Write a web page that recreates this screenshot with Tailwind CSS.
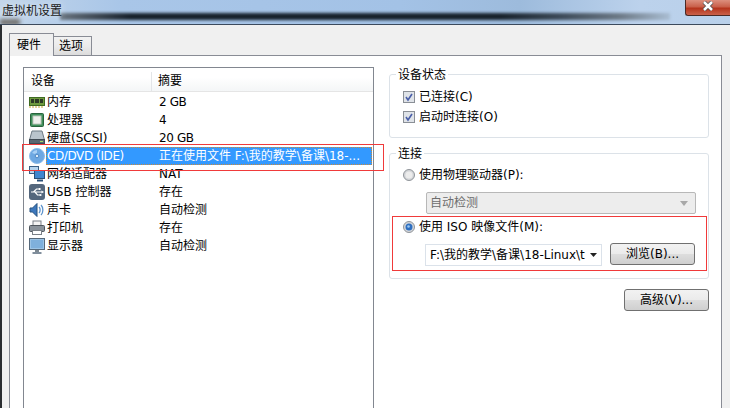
<!DOCTYPE html>
<html lang="zh-CN">
<head>
  <meta charset="UTF-8" />
  <title>虚拟机设置</title>
  <script src="https://cdn.jsdelivr.net/npm/@tailwindcss/browser@4"></script>
</head>
<body class="relative w-[730px] h-[408px] overflow-hidden bg-[#f0f0f0] text-[12px] leading-[18px] text-black font-['DejaVu_Sans','Noto_Sans_CJK_SC',sans-serif]">

  <!-- Title bar -->
  <header class="relative h-[25px] overflow-hidden border-b border-[#3c4a5c] bg-[linear-gradient(to_right,#c3d6ea_0,#a9c6e8_120px,#a3c2e6_400px,#9dbbdc_520px,#bcd2ec_640px,#b9d0ea_100%)]">
    <!-- blurred desktop showing through the glass -->
    <div class="absolute left-[60px] top-[13px] w-[610px] h-[7px] blur-[1.5px] bg-[linear-gradient(to_right,#6a7580,#18222c_70px,#18222c_440px,#3c4a58_500px,#6d7a87_560px,#a9bdd2)]"></div>
    <div class="absolute left-0 top-[19px] w-[20px] h-[6px] blur-[2px] bg-[#6d6a66]"></div>
    <span class="absolute left-[2px] top-[2px] text-[#1a1a1a] [text-shadow:0_0_6px_#e8eef5]">虚拟机设置</span>
    <div class="absolute right-0 top-0 w-[45px] h-[16px] rounded-bl-[3px] border-l border-b border-[#4b2a25] bg-[linear-gradient(to_bottom,#dc8f7e_0,#c9604a_45%,#b5341c_55%,#c9614a_100%)] flex items-start justify-center pt-[1px]">
      <svg width="12" height="10" viewBox="0 0 12 10"><path d="M2 1 L10 9 M10 1 L2 9" stroke="#4a4a4a" stroke-width="4"/><path d="M2 1 L10 9 M10 1 L2 9" stroke="#fff" stroke-width="2.500"/></svg>
    </div>
  </header>

  <div class="absolute left-0 top-[25px] bottom-0 w-[2px] bg-[#2a2d30]"></div>

  <main class="pl-[9px] pt-[8px] w-[722px]">
    <!-- Tabs -->
    <div class="flex items-end h-[22px]">
      <div class="w-[45px] h-[23px] pl-[7px] pt-[2px] border border-b-0 border-[#898c95] bg-[#f0f0f0] relative z-10 -mb-px">硬件</div>
      <div class="w-[38px] h-[19px] pl-[5px] border border-l-0 border-b-0 border-[#898c95] bg-[linear-gradient(to_bottom,#f2f2f2,#ebebeb_50%,#dcdcdc)]">选项</div>
    </div>

    <!-- Tab panel -->
    <div class="flex h-[360px] border border-b-0 border-[#898c95] bg-white pl-[13px] pt-[11px]">
      <!-- Device list -->
      <section class="w-[351px] h-[360px] border border-[#828790] bg-white shrink-0">
        <div class="flex h-[24px] border-b border-[#e5e5e5] bg-[linear-gradient(to_bottom,#fff,#fff_40%,#f4f6f7)] pt-[4px]">
          <div class="w-[128px] pl-[7px] border-r border-[#e3e5e8]">设备</div>
          <div class="pl-[6px]">摘要</div>
        </div>
        <ul class="pt-[1px]">
          <li class="flex h-[18px]">
            <span class="w-[23px] pl-[5px] pt-[2px] shrink-0"><svg width="16" height="14" viewBox="0 0 16 14"><rect x="0.5" y="2.5" width="15" height="8" fill="#6f9a3f" stroke="#3f6b22"/><rect x="2" y="4" width="3" height="4" fill="#2c3a25"/><rect x="6" y="4" width="4" height="4" fill="#2c3a25"/><rect x="11" y="4" width="3" height="4" fill="#2c3a25"/><path d="M1 11v2M4 11v2M7 11v2M10 11v2M13 11v2" stroke="#c7a534"/></svg></span>
            <span class="w-[112px] shrink-0">内存</span><span class="tracking-[-0.4px]">2 GB</span>
          </li>
          <li class="flex h-[18px]">
            <span class="w-[23px] pl-[6px] pt-[2px] shrink-0"><svg width="14" height="14" viewBox="0 0 14 14"><rect x="0.5" y="0.5" width="13" height="13" rx="1" fill="#3f8f5a" stroke="#28633c"/><rect x="3" y="3" width="8" height="8" fill="#eef0ec" stroke="#bfc7bd"/></svg></span>
            <span class="w-[112px] shrink-0">处理器</span><span>4</span>
          </li>
          <li class="flex h-[18px]">
            <span class="w-[23px] pl-[5px] pt-[1px] shrink-0"><svg width="16" height="15" viewBox="0 0 16 15"><path d="M3 1h10l2.500 9h-15z" fill="#b9c4cc" stroke="#6d7a84"/><rect x="0.500" y="9.500" width="15" height="4" fill="#5a6670" stroke="#3f4a53"/><rect x="11" y="11" width="3" height="1" fill="#9fdc6a"/></svg></span>
            <span class="w-[112px] shrink-0">硬盘(SCSI)</span><span class="tracking-[-0.4px]">20 GB</span>
          </li>
          <li class="flex h-[18px]">
            <span class="w-[22px] pl-[5px] pt-[1px] shrink-0"><svg width="16" height="16" viewBox="0 0 16 16"><circle cx="8" cy="8" r="7.500" fill="#6ea8e2" stroke="#8dbcea"/><path d="M3 5a6 6 0 0 1 5-3v3a3 3 0 0 0-2 1z" fill="#a9d0f4"/><circle cx="8" cy="8" r="1.800" fill="#dcecfa" stroke="#4f88c4"/></svg></span>
            <span class="flex-1 flex h-[18px] bg-[#3399ff] text-white outline-1 -outline-offset-1 outline-dotted outline-[#c98a3c] pl-[1px] mr-[1px]"><span class="w-[112px] shrink-0 tracking-[-0.4px]">CD/DVD (IDE)</span><span>正在使用文件 F:\我的教学\备课\18-...</span></span>
          </li>
          <li class="flex h-[18px]">
            <span class="w-[23px] pl-[5px] pt-[1px] shrink-0"><svg width="16" height="16" viewBox="0 0 16 16"><rect x="0.500" y="0.500" width="9" height="7" fill="#b6d4ee" stroke="#3a5f86"/><rect x="5.500" y="4.500" width="10" height="8" fill="#3f86cf" stroke="#2a4f78"/><path d="M8 14.500h6" stroke="#2a4f78" stroke-width="2"/></svg></span>
            <span class="w-[112px] shrink-0">网络适配器</span><span>NAT</span>
          </li>
          <li class="flex h-[18px]">
            <span class="w-[23px] pl-[5px] pt-[1px] shrink-0"><svg width="16" height="16" viewBox="0 0 16 16"><rect width="16" height="16" rx="3" fill="#54677d"/><path d="M2 8h11M4.500 8l3-3h2M6 8l2.500 3H11" stroke="#fff" fill="none" stroke-width="1.200"/><path d="M12.500 6.500l2.500 1.500-2.500 1.500z" fill="#fff"/><rect x="9.500" y="4" width="2" height="2" fill="#fff"/><circle cx="11.500" cy="11" r="1.100" fill="#fff"/></svg></span>
            <span class="w-[112px] shrink-0">USB 控制器</span><span>存在</span>
          </li>
          <li class="flex h-[18px]">
            <span class="w-[23px] pl-[5px] pt-[1px] shrink-0"><svg width="16" height="16" viewBox="0 0 16 16"><path d="M1 6h2.500L8 1.500v13L3.500 10H1z" fill="#3d78bd" stroke="#27527f"/><path d="M10 5c1.500 1.500 1.500 4.500 0 6M12 3c2.500 2.500 2.500 7.500 0 10" fill="none" stroke="#5d93cc" stroke-width="1.300"/></svg></span>
            <span class="w-[112px] shrink-0">声卡</span><span>自动检测</span>
          </li>
          <li class="flex h-[18px]">
            <span class="w-[23px] pl-[5px] pt-[1px] shrink-0"><svg width="16" height="16" viewBox="0 0 16 16"><rect x="4" y="1" width="8" height="5" fill="#f4f4f4" stroke="#7a8087"/><rect x="0.500" y="5.500" width="15" height="6" rx="1" fill="#8b939b" stroke="#50575e"/><rect x="3.500" y="10.500" width="9" height="4" fill="#fff" stroke="#7a8087"/></svg></span>
            <span class="w-[112px] shrink-0">打印机</span><span>存在</span>
          </li>
          <li class="flex h-[18px]">
            <span class="w-[23px] pl-[5px] pt-[1px] shrink-0"><svg width="16" height="16" viewBox="0 0 16 16"><rect x="0.500" y="0.500" width="15" height="11" fill="#9cc4e6" stroke="#56697b"/><rect x="2" y="2" width="12" height="8" fill="#7fb0dc"/><path d="M6 12h4v2H6z" fill="#7d8892"/><path d="M3.500 15h9" stroke="#56697b" stroke-width="1.500"/></svg></span>
            <span class="w-[112px] shrink-0">显示器</span><span>自动检测</span>
          </li>
        </ul>
      </section>

      <!-- Right column -->
      <div class="ml-[15px] w-[320px] pt-[7px] shrink-0">
        <fieldset class="relative h-[64px] border border-[#dce2e8] rounded-[3px] pl-[13px] pt-[12px]">
          <span class="absolute left-[6px] -top-[9px] bg-white px-[2px]">设备状态</span>
          <label class="flex items-center h-[20px] gap-[4px]">
            <svg width="12" height="12" viewBox="0 0 12 12"><rect x="0.500" y="0.500" width="11" height="11" fill="#dfe3e8" stroke="#8a8f96"/><path d="M3 6l2 3 4-6" fill="none" stroke="#4a5fa8" stroke-width="1.600"/></svg>
            已连接(C)
          </label>
          <label class="flex items-center h-[20px] gap-[4px]">
            <svg width="12" height="12" viewBox="0 0 12 12"><rect x="0.500" y="0.500" width="11" height="11" fill="#dfe3e8" stroke="#8a8f96"/><path d="M3 6l2 3 4-6" fill="none" stroke="#4a5fa8" stroke-width="1.600"/></svg>
            启动时连接(O)
          </label>
        </fieldset>

        <fieldset class="relative mt-[15px] h-[126px] border border-[#dce2e8] rounded-[3px] pl-[13px] pt-[12px]">
          <span class="absolute left-[6px] -top-[9px] bg-white px-[2px]">连接</span>
          <label class="flex items-center h-[18px] gap-[4px]">
            <svg width="12" height="12" viewBox="0 0 12 12"><circle cx="6" cy="6" r="5.500" fill="#d4d6d9" stroke="#8f9499"/><circle cx="6" cy="6" r="3.500" fill="#ececec"/></svg>
            使用物理驱动器(P):
          </label>
          <div class="ml-[23px] mt-[8px] flex items-center justify-between w-[270px] h-[22px] border border-[#b8b8b8] rounded-[2px] bg-[#ededed] pl-[3px] pr-[7px] text-[#6d6d6d]">
            自动检测
            <svg width="8" height="5" viewBox="0 0 8 5"><path d="M0 0h8L4 5z" fill="#a8a8a8"/></svg>
          </div>
          <label class="flex items-center h-[18px] gap-[4px] mt-[4px]">
            <svg width="12" height="12" viewBox="0 0 12 12"><circle cx="6" cy="6" r="5.500" fill="#d4d6d9" stroke="#8f9499"/><circle cx="6" cy="6" r="3.500" fill="#2f6fc0"/><circle cx="5.500" cy="5.500" r="1.300" fill="#9cc9f2"/></svg>
            使用 ISO 映像文件(M):
          </label>
          <div class="ml-[22px] mt-[8px] flex items-start">
            <div class="relative w-[177px] h-[22px] border border-[#dbe2ea] bg-white pl-[4px] leading-[20px] whitespace-nowrap">
              F:\我的教学\备课\18-Linux\t
              <svg class="absolute right-[4px] top-[8px]" width="7" height="4" viewBox="0 0 7 4"><path d="M0 0h7L3.500 4z" fill="#222"/></svg>
            </div>
            <div class="ml-[8px] -mt-px w-[85px] h-[22px] rounded-[3px] border border-[#707070] bg-[linear-gradient(to_bottom,#f2f2f2,#ebebeb_48%,#dddddd_52%,#cfcfcf)] flex items-center justify-center">浏览(B)...</div>
          </div>
        </fieldset>

        <div class="mt-[10px] ml-[235px] w-[85px] h-[22px] rounded-[3px] border border-[#707070] bg-[linear-gradient(to_bottom,#f2f2f2,#ebebeb_48%,#dddddd_52%,#cfcfcf)] flex items-center justify-center">高级(V)...</div>
      </div>
    </div>
  </main>

  <!-- Red annotation boxes drawn over the screenshot -->
  <div class="absolute left-[22px] top-[144px] w-[362px] h-[27px] border border-[#f03a3a]"></div>
  <div class="absolute left-[392px] top-[216px] w-[315px] h-[55px] border border-[#f03a3a]"></div>
</body>
</html>
